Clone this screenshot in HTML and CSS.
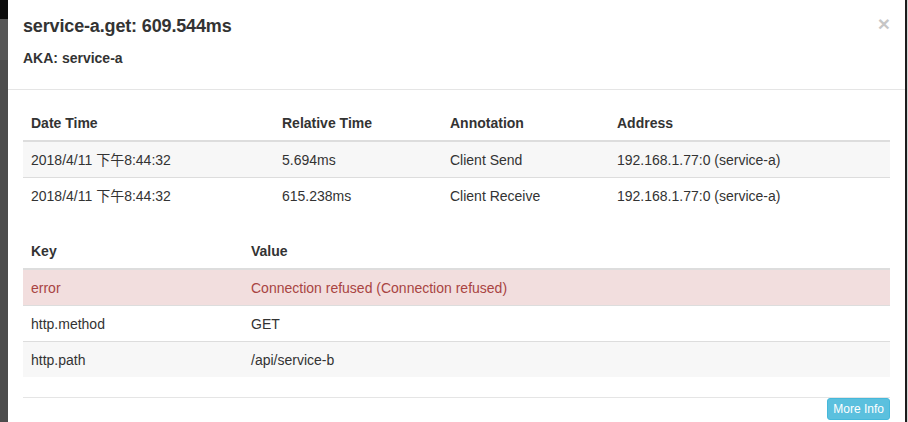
FILE: index.html
```html
<!DOCTYPE html>
<html lang="zh">
<head>
<meta charset="utf-8">
<title>Span details</title>
<link rel="stylesheet" href="styles.css">
</head>
<body>
<div class="screen">
  <div class="shade-left"></div>
  <div class="modal">
    <div class="modal-header">
      <div class="titles">
        <h4 class="modal-title">service-a.get: 609.544ms</h4>
        <h5 class="aka">AKA: service-a</h5>
      </div>
      <button class="close" type="button">×</button>
    </div>
    <div class="modal-body">
      <table class="table annotations">
        <thead>
          <tr>
            <th class="c-date">Date Time</th>
            <th class="c-rel">Relative Time</th>
            <th class="c-ann">Annotation</th>
            <th>Address</th>
          </tr>
        </thead>
        <tbody>
          <tr>
            <td>2018/4/11 下午8:44:32</td>
            <td>5.694ms</td>
            <td>Client Send</td>
            <td>192.168.1.77:0 (service-a)</td>
          </tr>
          <tr>
            <td>2018/4/11 下午8:44:32</td>
            <td>615.238ms</td>
            <td>Client Receive</td>
            <td>192.168.1.77:0 (service-a)</td>
          </tr>
        </tbody>
      </table>
      <table class="table tags">
        <thead>
          <tr>
            <th class="c-key">Key</th>
            <th>Value</th>
          </tr>
        </thead>
        <tbody>
          <tr class="danger">
            <td>error</td>
            <td>Connection refused (Connection refused)</td>
          </tr>
          <tr>
            <td>http.method</td>
            <td>GET</td>
          </tr>
          <tr>
            <td>http.path</td>
            <td>/api/service-b</td>
          </tr>
        </tbody>
      </table>
      <div class="footer-bar">
        <button class="btn-info" type="button">More Info</button>
      </div>
    </div>
  </div>
  <div class="shade-right"></div>
</div>
</body>
</html>
```
FILE: styles.css
```css
html, body {
  margin: 0;
  height: 100%;
  overflow: hidden;
}

body {
  font-family: "Liberation Sans", "Noto Sans CJK SC", sans-serif;
  font-size: 14px;
  line-height: 20px;
  color: #333;
  background: #4d4d4d;
}

.screen {
  display: flex;
  height: 422px;
}

.shade-left {
  flex: none;
  width: 8px;
  background: linear-gradient(#0c0c0c 0 19px, #575757 19px 60px, #4c4c4c 60px);
}

.shade-right {
  flex: none;
  width: 3px;
  box-sizing: border-box;
  border-left: 2px solid #1c1c1c;
  background: #d4d4d4;
}

.modal {
  flex: 1;
  min-width: 0;
  background: #fff;
}

.modal-header {
  display: flex;
  justify-content: space-between;
  align-items: flex-start;
  padding: 13px 15px 15px;
  border-bottom: 1px solid #e5e5e5;
}

.modal-title {
  margin: 0;
  font-size: 18px;
  font-weight: 700;
  line-height: 26px;
  letter-spacing: -0.15px;
  color: #333;
}

.aka {
  margin: 11px 0 8px;
  font-size: 14px;
  font-weight: 700;
  line-height: 16px;
  color: #333;
}

.close {
  margin: 0;
  padding: 0;
  border: 0;
  background: none;
  font-family: "Liberation Sans", sans-serif;
  font-size: 21px;
  font-weight: 700;
  line-height: 21px;
  color: #000;
  opacity: 0.22;
}

.modal-body {
  padding: 15px 15px 0;
}

.table {
  width: 100%;
  table-layout: fixed;
  border-collapse: collapse;
  border-spacing: 0;
  margin-bottom: 20px;
}

.table th,
.table td {
  padding: 9px 8px 7px;
  line-height: 19px;
  text-align: left;
  vertical-align: top;
}

.table th {
  font-weight: 700;
  vertical-align: bottom;
  border-bottom: 2px solid #ddd;
}

.table td {
  border-top: 1px solid #ddd;
}

.table tbody tr:nth-child(odd) td {
  background: #f7f7f7;
}

.table tbody tr.danger td {
  background: #f2dede;
  color: #a94442;
}

.c-date { width: 235px; }
.c-rel { width: 152px; }
.c-ann { width: 151px; }
.c-key { width: 204px; }

.footer-bar {
  display: flex;
  justify-content: flex-end;
  border-top: 1px solid #e5e5e5;
}

.btn-info {
  margin: 0;
  padding: 1px 5px;
  border: 1px solid #46b8da;
  border-radius: 3px;
  background: #5bc0de;
  color: #fff;
  font-family: "Liberation Sans", sans-serif;
  font-size: 12px;
  line-height: 18px;
}
```
